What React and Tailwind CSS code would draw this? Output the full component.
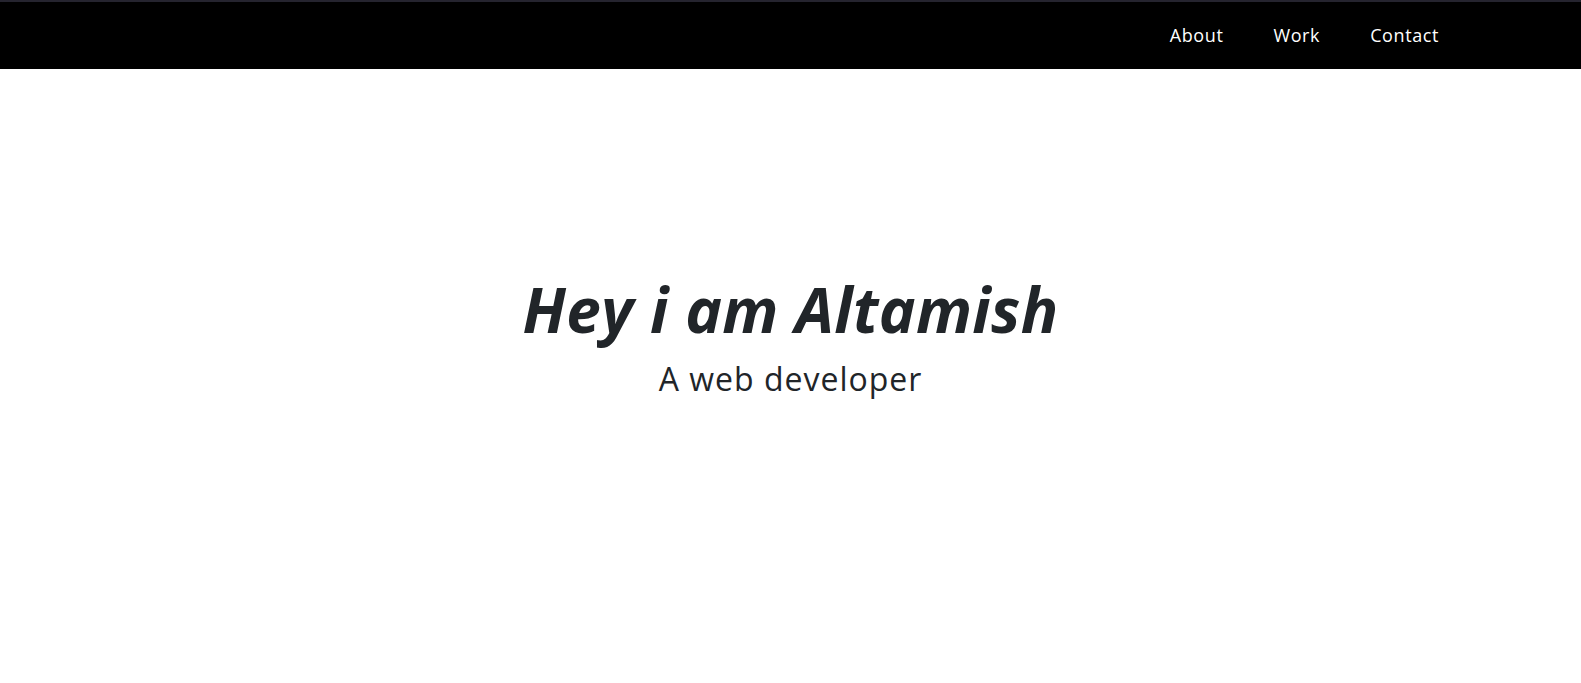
import React from 'react';

function App() {
  const links = ['About', 'Work', 'Contact'];

  return (
    <div className="min-h-screen bg-white">
      {/* Navbar */}
      <nav className="h-[69px] bg-black border-t-2 border-t-[#25242f] flex items-center justify-end pr-[142px]">
        <ul className="flex gap-[50px]">
          {links.map((l) => (
            <li key={l}>
              <a href="#" className="text-white text-[18px] tracking-[0.6px] font-['Open_Sans',sans-serif]">{l}</a>
            </li>
          ))}
        </ul>
      </nav>

      {/* Hero */}
      <section className="flex flex-col items-center pt-[203px] text-[#212529]">
        <h1 className="text-[62px] leading-[1.2] font-bold italic tracking-[0.3px] font-['Open_Sans',sans-serif]">Hey i am Altamish</h1>
        <p className="mt-3 text-[32px] leading-[1.3] tracking-[1px] font-['Open_Sans',sans-serif]">A web developer</p>
      </section>
    </div>
  );
}

export default App;
